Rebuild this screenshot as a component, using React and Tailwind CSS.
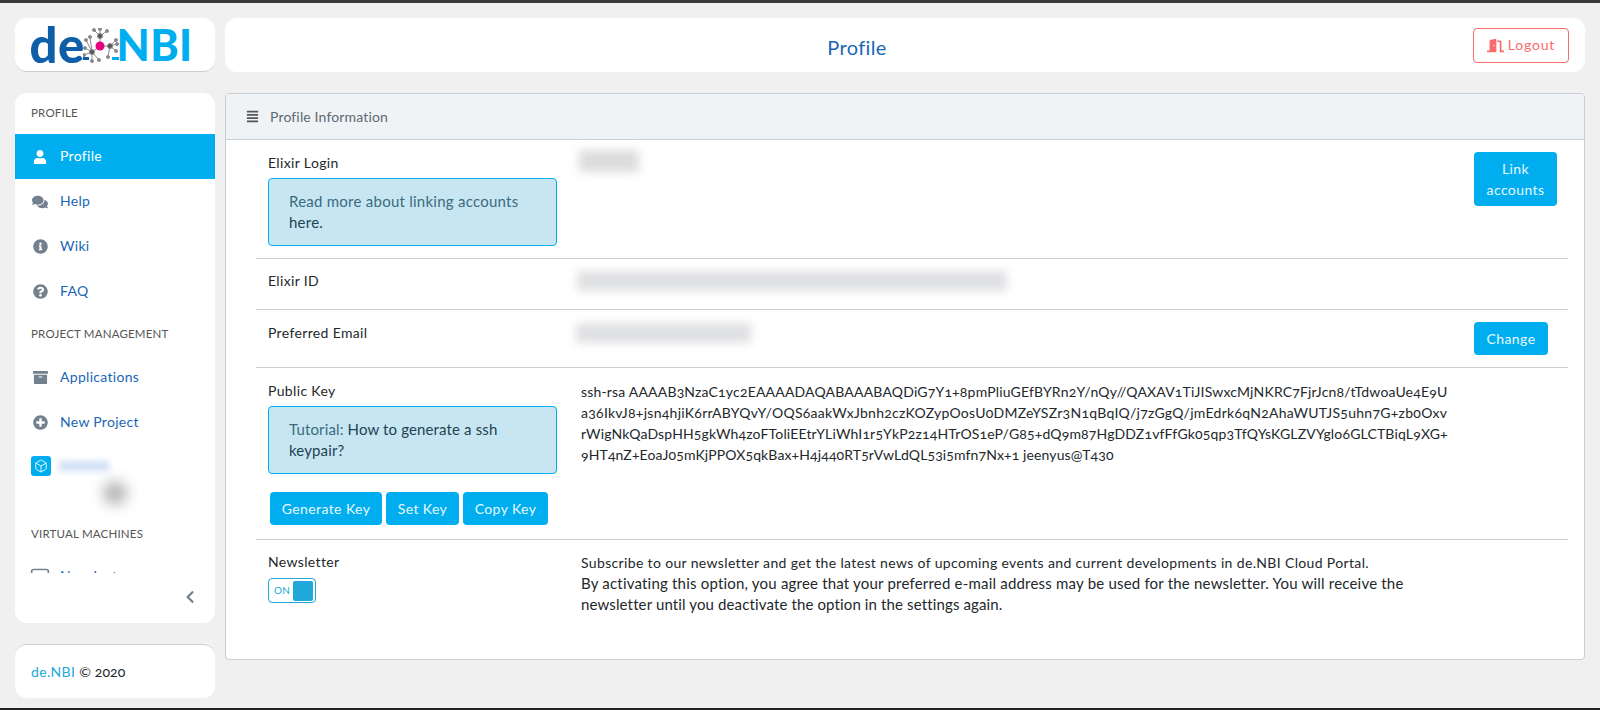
import { Box, Monitor } from "lucide-react";
import {
  FaAlignJustify,
  FaArchive,
  FaChevronLeft,
  FaComments,
  FaDoorOpen,
  FaInfoCircle,
  FaPlusCircle,
  FaQuestionCircle,
  FaUser,
} from "react-icons/fa";

const Logo = () => (
  <div className="flex items-center justify-center pr-[8px] h-[54px] bg-white rounded-xl border-b border-[#c8ced3] font-['Lato',sans-serif] font-black leading-none">
    <span className="text-[49px] text-[#0f5ea8]">de</span>
    <svg width="36" height="36" viewBox="0 0 36 36" className="mx-[-2px] mt-[2px] shrink-0">
      <path d="M0 30.5 L6 30.5" stroke="#0f5ea8" strokeWidth="3" fill="none" />
      <path d="M29 30.5 L36 30.5" stroke="#00aeef" strokeWidth="3" fill="none" />
      <g stroke="#8a8a8a" strokeWidth="1" fill="#8a8a8a">
        <path d="M17 18 L17 8 M17 8 L11 2 M17 8 L17 1 M17 8 L24 3 M17 18 L27 18 M27 18 L33 12 M27 18 L34 16 M27 18 L33 23 M27 18 L25 29 M17 18 L9 24 M9 24 L2 20 M9 24 L1 27 M9 24 L9 33 M9 24 L16 32 M9 24 L3 12 M9 24 L7 9" fill="none" />
        <circle cx="11" cy="2" r="1.5" />
        <circle cx="17" cy="1" r="1.5" />
        <circle cx="24" cy="3" r="1.5" />
        <circle cx="33" cy="12" r="1.5" />
        <circle cx="34" cy="16" r="1.5" />
        <circle cx="33" cy="23" r="1.5" />
        <circle cx="25" cy="29" r="1.5" />
        <circle cx="2" cy="20" r="1.5" />
        <circle cx="1" cy="27" r="1.5" />
        <circle cx="9" cy="33" r="1.5" />
        <circle cx="16" cy="32" r="1.5" />
        <circle cx="3" cy="12" r="1.5" />
        <circle cx="7" cy="9" r="1.5" />
        <circle cx="17" cy="8" r="2.5" fill="#555" />
        <circle cx="27" cy="18" r="2.5" fill="#555" />
        <circle cx="9" cy="24" r="2.5" fill="#555" />
      </g>
      <circle cx="17" cy="18" r="4.5" fill="#e6007e" />
    </svg>
    <span className="text-[43px] text-[#00aeef]">NBI</span>
  </div>
);

const NavTitle = ({ children }) => (
  <div className="h-[41px] pl-[16px] flex items-center text-[11.5px] uppercase text-[#555] tracking-[0.2px]">
    {children}
  </div>
);

const NavItem = ({ icon: Icon, label, active, size = 15 }) => (
  <div
    className={
      active
        ? "h-[45px] flex items-center bg-[#00aeef] text-white text-sm tracking-[0.3px]"
        : "h-[45px] flex items-center text-[#1b66b3] text-sm tracking-[0.3px]"
    }
  >
    <span
      className={
        active
          ? "w-[50px] flex justify-center text-white"
          : "w-[50px] flex justify-center text-[#73818f]"
      }
    >
      <Icon size={size} />
    </span>
    <span className="ml-[-5px] pb-[2px]">{label}</span>
  </div>
);

const Sidebar = () => (
  <div className="h-[530px] bg-white rounded-xl overflow-hidden">
    <div className="h-[480px] overflow-hidden">
      <NavTitle>Profile</NavTitle>
      <NavItem icon={FaUser} label="Profile" active size={14} />
      <NavItem icon={FaComments} label="Help" size={16} />
      <NavItem icon={FaInfoCircle} label="Wiki" />
      <NavItem icon={FaQuestionCircle} label="FAQ" />
      <NavTitle>Project Management</NavTitle>
      <NavItem icon={FaArchive} label="Applications" />
      <NavItem icon={FaPlusCircle} label="New Project" />
      <div className="h-[69px] flex pl-[16px] pt-[11px]">
        <div className="w-[20px] h-[20px] rounded-[3px] bg-[#00aeef] flex items-center justify-center text-white">
          <Box size={14} strokeWidth={1.5} />
        </div>
        <div className="ml-[8px] w-[110px]">
          <div className="w-[50px] h-[10px] mt-[5px] bg-[#cfe0f5] blur-[3px]" />
          <div className="w-[24px] h-[24px] mt-[10px] ml-[44px] rounded-full bg-[#b5b5b5] blur-[7px]" />
        </div>
      </div>
      <NavTitle>Virtual Machines</NavTitle>
      <div className="-mt-px">
        <NavItem icon={Monitor} label="New Instance" size={20} />
      </div>
    </div>
    <div className="h-[50px] flex items-center justify-end pr-[18px] pb-[2px] text-[#73818f]">
      <FaChevronLeft size={14} />
    </div>
  </div>
);

const Row = ({ label, children, note, action, className, last }) => (
  <div
    className={
      last
        ? "grid grid-cols-[313px_893px_1fr] " + className
        : "grid grid-cols-[313px_893px_1fr] border-b border-[#c8ced3] " + className
    }
  >
    <div className="pl-[12px]">
      <div className="h-[21px] leading-[21px] text-[#23282c]">{label}</div>
      {note}
    </div>
    <div className="pl-[12px]">{children}</div>
    <div className="pl-[12px]">{action}</div>
  </div>
);

const Note = ({ children, className }) => (
  <div
    className={
      "w-[289px] mt-[5px] h-[68px] px-[20px] py-[12px] bg-[#c7e6f2] border border-[#00aeef] rounded-[4px] text-[#3b6b80] text-[15px] leading-[21px] " +
      className
    }
  >
    {children}
  </div>
);

const Btn = ({ children, className }) => (
  <button className={"bg-[#00aeef] text-[#e6f8ff] rounded-[4px] tracking-[0.4px] " + className}>
    {children}
  </button>
);

const keyLines = [
  {
    text: "ssh-rsa AAAAB3NzaC1yc2EAAAADAQABAAABAQDiG7Y1+8pmPliuGEfBYRn2Y/nQy//QAXAV1TiJISwxcMjNKRC7FjrJcn8/tTdwoaUe4E9U",
    cls: "tracking-[0.18px]",
  },
  {
    text: "a36IkvJ8+jsn4hjiK6rrABYQvY/OQS6aakWxJbnh2czKOZypOosU0DMZeYSZr3N1qBqIQ/j7zGgQ/jmEdrk6qN2AhaWUTJS5uhn7G+zb0Oxv",
    cls: "tracking-[0.27px]",
  },
  {
    text: "rWigNkQaDspHH5gkWh4zoFToliEEtrYLiWhI1r5YkP2z14HTrOS1eP/G85+dQ9m87HgDDZ1vfFfGk05qp3TfQYsKGLZVYglo6GLCTBiqL9XG+",
    cls: "tracking-[0.16px]",
  },
  {
    text: "9HT4nZ+EoaJ05mKjPPOX5qkBax+H4j440RT5rVwLdQL53i5mfn7Nx+1 jeenyus@T430",
    cls: "tracking-[0.12px]",
  },
];

export default function App() {
  return (
    <div className="w-[1600px] h-[710px] flex flex-col overflow-hidden bg-[#f0f0f0] font-['Lato',sans-serif] text-sm tracking-[0.35px] oldstyle-nums">
      <div className="h-[3px] bg-[#3a3a3a] shrink-0" />
      <div className="flex-1 grid grid-cols-[200px_1fr] gap-x-[10px] px-[15px] pt-[15px]">
        <div className="flex flex-col gap-y-[21px]">
          <Logo />
          <Sidebar />
          <div className="h-[54px] bg-white rounded-xl border-t border-[#c8ced3] pl-[16px] flex items-center text-[#23282c]">
            <span className="text-[#20a8d8]">de.NBI</span>
            <span className="ml-[4px] tracking-[0.1px]">© 2020</span>
          </div>
        </div>
        <div className="flex flex-col gap-y-[21px]">
          <div className="h-[54px] bg-white rounded-xl flex items-center">
            <div className="w-[1264px] pt-[5px] text-center text-[20px] text-[#1b66b3]">Profile</div>
            <button className="ml-[-16px] w-[96px] h-[35px] border border-[#f86c6b] rounded-[4px] text-[#f86c6b] tracking-[0.8px] flex items-center justify-center gap-x-[4px]">
              <FaDoorOpen size={17} />
              Logout
            </button>
          </div>
          <div className="h-[567px] bg-white border border-[#c8ced3] rounded-[4px] overflow-hidden">
            <div className="h-[46px] bg-[#f0f3f5] border-b border-[#c8ced3] flex items-center pl-[20px] text-[#5c6873] tracking-[0.15px]">
              <FaAlignJustify size={13} className="text-[#555]" />
              <span className="ml-[11px]">Profile Information</span>
            </div>
            <div className="ml-[30px] mr-[16px]">
              <Row
                label="Elixir Login"
                className="h-[119px] pt-[12px]"
                note={
                  <Note className="tracking-[0.25px]">
                    Read more about linking accounts <span className="text-[#1d4354]">here.</span>
                  </Note>
                }
                action={
                  <Btn className="w-[83px] h-[54px] leading-[21px]">
                    Link
                    <br />
                    accounts
                  </Btn>
                }
              >
                <div className="w-[60px] h-[22px] mt-[-2px] ml-[-2px] bg-[#dcdcdc] blur-[5px]" />
              </Row>
              <Row label="Elixir ID" className="h-[51px] pt-[11px]">
                <div className="w-[430px] h-[20px] mt-[1px] ml-[-4px] bg-[#dfe0e2] blur-[5px]" />
              </Row>
              <Row
                label="Preferred Email"
                className="h-[58px] pt-[12px]"
                action={<Btn className="w-[74px] h-[33px]">Change</Btn>}
              >
                <div className="w-[175px] h-[20px] mt-[1px] ml-[-5px] bg-[#dfe0e2] blur-[5px]" />
              </Row>
              <Row
                label="Public Key"
                className="h-[172px] pt-[12px]"
                note={
                  <>
                    <Note className="tracking-[0.14px]">
                      Tutorial: <span className="text-[#1d4354]">How to generate a ssh keypair?</span>
                    </Note>
                    <div className="flex gap-x-[4px] mt-[18px] ml-[2px]">
                      <Btn className="w-[112px] h-[33px]">Generate Key</Btn>
                      <Btn className="w-[73px] h-[33px]">Set Key</Btn>
                      <Btn className="w-[85px] h-[33px]">Copy Key</Btn>
                    </div>
                  </>
                }
              >
                <div className="pt-[1px] text-[#23282c] leading-[21px] whitespace-nowrap">
                  {keyLines.map((line) => (
                    <div key={line.text} className={line.cls}>
                      {line.text}
                    </div>
                  ))}
                </div>
              </Row>
              <Row
                label="Newsletter"
                last
                className="pt-[11px]"
                note={
                  <div className="w-[48px] h-[25px] mt-[6px] border border-[#20a8d8] rounded-[4px] flex items-center justify-between pl-[5px] pr-[2px] text-[10px] text-[#20a8d8]">
                    ON
                    <span className="w-[20px] h-[20px] rounded-[2px] bg-[#20a8d8]" />
                  </div>
                }
              >
                <div className="pt-[1px] text-[#23282c] leading-[21px] whitespace-nowrap">
                  <div>Subscribe to our newsletter and get the latest news of upcoming events and current developments in de.NBI Cloud Portal.</div>
                  <div className="text-[15px] tracking-[0.2px]">By activating this option, you agree that your preferred e-mail address may be used for the newsletter. You will receive the</div>
                  <div className="text-[15px] tracking-[0.13px]">newsletter until you deactivate the option in the settings again.</div>
                </div>
              </Row>
            </div>
          </div>
        </div>
      </div>
      <div className="h-[2px] bg-[#222] shrink-0" />
    </div>
  );
}
